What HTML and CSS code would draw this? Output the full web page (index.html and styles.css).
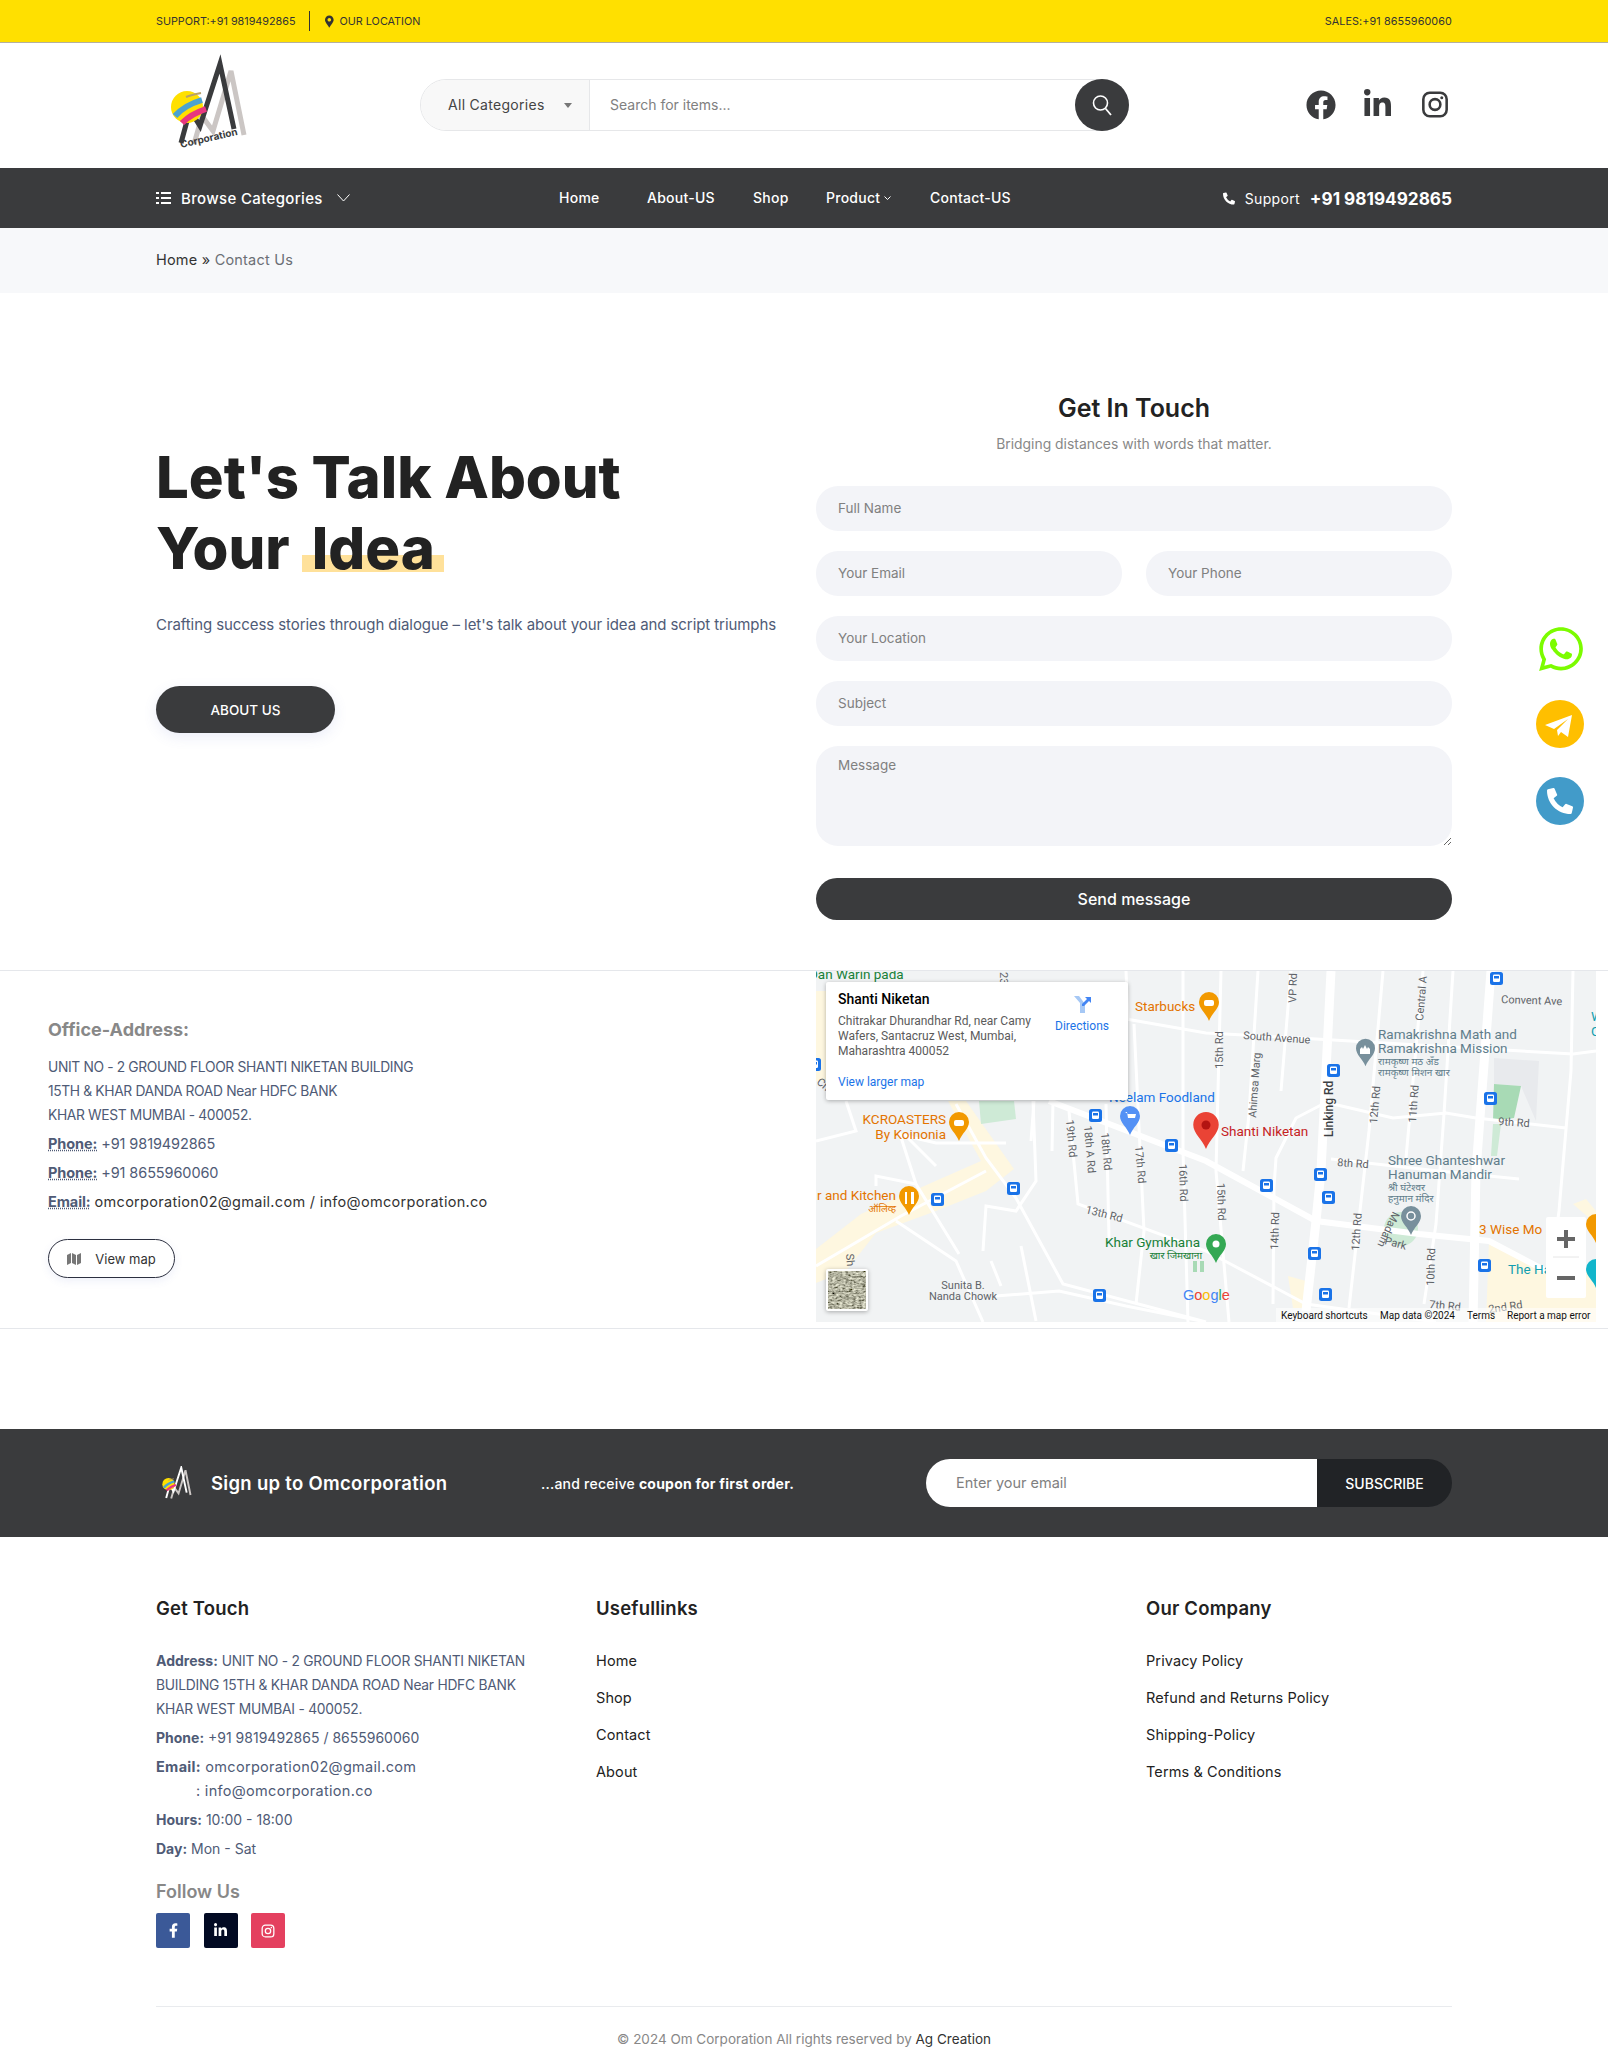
FILE: index.html
```html
<!DOCTYPE html>
<html lang="en">
<head>
<meta charset="utf-8" />
<title>Contact Us - Om Corporation</title>
<link rel="stylesheet" href="styles.css">
</head>
<body>
<svg class="defs" width="0" height="0">
  <filter id="sat" x="0" y="0" width="100%" height="100%">
    <feTurbulence type="fractalNoise" baseFrequency=".3 .55" numOctaves="2" seed="4"/>
    <feColorMatrix values="0 0 0 1.300 -.2  0 0 0 1.300 -.2  0 0 0 1.100 -.2  0 0 0 0 1"/>
  </filter>
  <symbol id="mark" viewBox="0 0 140 100">
    <path d="M54 98 62 70 73 85 91 25 104 89" fill="none" stroke="#cbc6c4" stroke-width="5"/>
    <path d="M41 97 50 64 60 80 80 18 94 83" fill="none" stroke="currentColor" stroke-width="5"/>
    <circle cx="47" cy="61" r="16" fill="#ffe000"/>
    <path d="M35 70C42 62 52 57 62 54" fill="none" stroke="#4ba3cf" stroke-width="6"/>
    <path d="M42 77C49 70 57 66 66 63" fill="none" stroke="#e8377f" stroke-width="6"/>
    <path d="M46 51C51 49 56 48 61 47" fill="none" stroke="#b8a16a" stroke-width="2"/>
  </symbol>
  <symbol id="phone" viewBox="0 0 512 512"><path d="M497.390 361.800l-112-48a24 24 0 0 0-28 6.900l-49.600 60.600A370.660 370.660 0 0 1 130.600 204.110l60.600-49.600a23.940 23.940 0 0 0 6.900-28l-48-112A24.160 24.160 0 0 0 122.600.61l-104 24A24 24 0 0 0 0 48c0 256.500 207.900 464 464 464a24 24 0 0 0 23.400-18.600l24-104a24.290 24.290 0 0 0-14.010-27.600z"/></symbol>
  <symbol id="fb-f" viewBox="0 0 320 512"><path d="M279.140 288l14.220-92.660h-88.910v-60.130c0-25.350 12.420-50.060 52.240-50.060h40.420V6.260S260.430 0 225.360 0c-73.220 0-121.080 44.380-121.080 124.720v70.620H22.890V288h81.390v224h100.170V288z"/></symbol>
  <symbol id="in" viewBox="0 0 448 512"><path d="M100.280 448H7.400V148.900h92.880zM53.790 108.100C24.090 108.100 0 83.500 0 53.800a53.790 53.790 0 0 1 107.580 0c0 29.700-24.100 54.300-53.790 54.300zM447.900 448h-92.680V302.400c0-34.700-.7-79.200-48.290-79.200-48.290 0-55.690 37.700-55.690 76.700V448h-92.780V148.900h89.080v40.800h1.300c12.400-23.500 42.690-48.300 87.880-48.300 94 0 111.280 61.900 111.280 142.300V448z"/></symbol>
  <symbol id="ig" viewBox="0 0 24 24"><rect x="2" y="2" width="20" height="20" rx="5.500" fill="none" stroke="currentColor" stroke-width="2.200"/><circle cx="12" cy="12" r="4.600" fill="none" stroke="currentColor" stroke-width="2.200"/><circle cx="17.800" cy="6.200" r="1.300" fill="currentColor"/></symbol>
  <symbol id="pin" viewBox="0 0 20 29"><path d="M10 0a10 10 0 0 1 10 10c0 7-7 11-10 19C7 21 0 17 0 10A10 10 0 0 1 10 0z"/></symbol>
  <symbol id="bus" viewBox="0 0 13 13"><rect width="13" height="13" rx="2.500" fill="#1a73e8"/><rect x="3" y="2.500" width="7" height="7.500" rx="1.200" fill="#fff"/><rect x="4" y="4" width="5" height="2.500" fill="#1a73e8"/></symbol>
</svg>

<div class="topbar">
  <div class="wrap topbar-in">
    <span>SUPPORT:+91 9819492865</span>
    <span class="top-sep"></span>
    <svg class="top-pin" viewBox="0 0 384 512"><path d="M172.268 501.670C26.970 291.031 0 262.429 0 184 0 82.380 82.380 0 184 0s184 82.380 184 184c0 78.429-26.970 107.031-172.268 317.670-9.535 13.774-29.930 13.773-39.464 0zM184 260c41.974 0 76-34.026 76-76s-34.026-76-76-76-76 34.026-76 76 34.026 76 76 76z"/></svg>
    <span>OUR LOCATION</span>
    <span class="top-sales">SALES:+91 8655960060</span>
  </div>
</div>

<header class="header">
  <div class="wrap header-in">
    <div class="logo">
      <svg viewBox="0 0 140 120" width="140" height="120">
        <use href="#mark" width="140" height="100" class="logo-dark"/>
        <text x="41" y="102" transform="rotate(-13 41 102)" class="logo-text">Corporation</text>
      </svg>
    </div>
    <form class="search">
      <div class="search-cat">All Categories <span class="caret"></span></div>
      <input class="search-input" type="text" placeholder="Search for items...">
      <button class="search-btn" type="button">
        <svg viewBox="0 0 24 24" width="24" height="24"><circle cx="10.500" cy="10" r="7" fill="none" stroke="#fff" stroke-width="1.600"/><path d="M15.500 15.500 21 22" stroke="#fff" stroke-width="1.800"/></svg>
      </button>
    </form>
    <div class="head-social">
      <svg class="hs-fb" viewBox="0 0 512 512"><path d="M504 256C504 119 393 8 256 8S8 119 8 256c0 123.780 90.690 226.380 209.250 245V327.690h-63V256h63v-54.640c0-62.150 37-96.480 93.670-96.480 27.140 0 55.520 4.840 55.520 4.840v61h-31.280c-30.800 0-40.410 19.120-40.410 38.730V256h68.780l-11 71.690h-57.780V501C413.310 482.380 504 379.780 504 256z"/></svg>
      <svg class="hs-in"><use href="#in"/></svg>
      <svg class="hs-ig"><use href="#ig"/></svg>
    </div>
  </div>
</header>

<nav class="nav">
  <div class="wrap nav-in">
    <div class="browse">
      <svg width="15" height="14" viewBox="0 0 15 14"><path d="M0 1h3v2H0zM5 1h10v2H5zM0 6h3v2H0zM5 6h10v2H5zM0 11h3v2H0zM5 11h10v2H5z" fill="#fff"/></svg>
      <span>Browse Categories</span>
      <svg width="13" height="8" viewBox="0 0 13 8"><path d="M.5.5l6 6.500 6-6.500" fill="none" stroke="#fff"/></svg>
    </div>
    <div class="nav-links">
      <a>Home</a>
      <a>About-US</a>
      <a>Shop</a>
      <a>Product <svg width="7" height="5" viewBox="0 0 7 5"><path d="M.5.5l3 3 3-3" fill="none" stroke="#fff"/></svg></a>
      <a>Contact-US</a>
    </div>
    <div class="support">
      <svg class="sup-ico"><use href="#phone"/></svg>
      <span>Support</span>
      <b>+91 9819492865</b>
    </div>
  </div>
</nav>

<div class="crumb">
  <div class="wrap"><a>Home</a> » <span>Contact Us</span></div>
</div>

<section class="wrap hero">
  <div class="hero-left">
    <h1>Let's Talk About<br>Your <span class="mark">Idea</span></h1>
    <p class="hero-text">Crafting success stories through dialogue – let's talk about your idea and script triumphs</p>
    <a class="btn-about">ABOUT US</a>
  </div>
  <div class="hero-form">
    <h2>Get In Touch</h2>
    <p class="form-sub">Bridging distances with words that matter.</p>
    <form class="form-grid">
      <input class="field full" placeholder="Full Name">
      <input class="field" placeholder="Your Email">
      <input class="field" placeholder="Your Phone">
      <input class="field full" placeholder="Your Location">
      <input class="field full" placeholder="Subject">
      <textarea class="field area full" placeholder="Message"></textarea>
      <button class="send full" type="button">Send message</button>
    </form>
  </div>
</section>

<section class="office">
  <div class="office-left">
    <h4>Office-Address:</h4>
    <p class="addr">UNIT NO - 2 GROUND FLOOR SHANTI NIKETAN BUILDING<br>15TH &amp; KHAR DANDA ROAD Near HDFC BANK<br>KHAR WEST MUMBAI - 400052.</p>
    <p class="contact"><abbr>Phone:</abbr> +91 9819492865</p>
    <p class="contact"><abbr>Phone:</abbr> +91 8655960060</p>
    <p class="contact"><abbr>Email:</abbr> <span class="dark">omcorporation02@gmail.com / info@omcorporation.co</span></p>
    <a class="view-map">
      <svg width="14" height="12" viewBox="0 0 14 12"><path d="M0 2l4-2v10l-4 2zM5 0l4 2v10l-4-2zM10 2l4-2v10l-4 2z" fill="#777"/></svg>
      View map
    </a>
  </div>
  <div class="map">
    <svg class="map-svg" width="780" height="351" viewBox="0 0 780 351">
      <rect width="780" height="351" fill="#f1f3f4"/>
      <!-- areas -->
      <path d="M0 312 0 278 45 243 115 212 165 190 132 130 150 130 198 198 170 220 120 240 60 262 30 300z" fill="#fef7e0"/>
      <path d="M0 20 20 20 20 110 0 110z" fill="#fef7e0"/>
      <path d="M673 270 730 300 780 300 780 351 670 351zM757 233 780 253 780 240 770 228zM472 305 490 310 487 337 477 337z" fill="#fef7e0"/>
      <path d="M163 130 198 130 200 148 165 153z" fill="#ceead6"/>
      <path d="M678 87 723 90 720 150 705 115 678 113z" fill="#e8eaed"/>
      <path d="M678 113 705 115 698 147 677 150z" fill="#a8dab5"/>
      <path d="M677 153 685 153 681 185 675 185z" fill="#ceead6"/>
      <circle cx="585" cy="258" r="17" fill="#ceead6"/>
      <path d="M377 290h4v11h-4zM384 290h4v11h-4z" fill="#a8dab5"/>
      <!-- roads -->
      <g class="road-s">
        <path d="M367 0 367 180 372 351M405 0 400 200 413 351M318 53 328 260 320 333M290 133 293 267M253 140 262 233 390 280 490 333 620 351M442 0 433 143 427 200M475 0 465 120M507 133 480 147 460 187 458 217 457 333"/>
        <path d="M637 0 628 143 620 253 608 333M607 0 590 187M517 133 577 147 630 142 660 147 750 157M515 188 623 200 703 208M757 0 755 100 743 240 735 300M567 0 553 160 533 337"/>
        <path d="M140 133 170 187 200 227 247 313 390 351M180 325 243 320 310 335 390 351M80 250 140 290 167 351M83 160 100 213 143 283M0 295 85 245 170 200M100 213 60 205 60 215M120 195 90 165 120 172 190 172M217 130 220 210 200 240 170 235 167 280M0 170 40 160 30 130"/>
        <path d="M310 48 390 62 500 68 757 83 780 80M310 0 312 48M215 170 218 130M237 130 236 180M205 275 220 350M175 290 185 315"/>
      </g>
      <g class="road-l">
        <path d="M233 130 390 190 500 250 603 263 673 270 730 300"/>
        <path d="M515 0 505 200 500 250 490 340"/>
        <path d="M675 0 660 200 657 351"/>
      </g>
      <!-- labels -->
      <g class="lbl-road">
        <text x="250" y="149" transform="rotate(85 250 149)">19th Rd</text>
        <text x="268" y="155" transform="rotate(85 268 155)">18th A Rd</text>
        <text x="285" y="162" transform="rotate(85 285 162)">18th Rd</text>
        <text x="319" y="175" transform="rotate(85 319 175)">17th Rd</text>
        <text x="363" y="193" transform="rotate(88 363 193)">16th Rd</text>
        <text x="269" y="242" transform="rotate(14 269 242)">13th Rd</text>
        <text x="407" y="98" transform="rotate(-90 407 98)">15th Rd</text>
        <text x="401" y="212" transform="rotate(88 401 212)">15th Rd</text>
        <text x="480" y="32" transform="rotate(-88 480 32)">VP Rd</text>
        <text x="427" y="68" transform="rotate(4 427 68)">South Avenue</text>
        <text x="440" y="147" transform="rotate(-86 440 147)">Ahimsa Marg</text>
        <text x="561" y="153" transform="rotate(-85 561 153)">12th Rd</text>
        <text x="607" y="50" transform="rotate(-85 607 50)">Central A</text>
        <text x="600" y="152" transform="rotate(-86 600 152)">11th Rd</text>
        <text x="685" y="32" transform="rotate(2 685 32)">Convent Ave</text>
        <text x="682" y="154" transform="rotate(4 682 154)">9th Rd</text>
        <text x="521" y="195" transform="rotate(4 521 195)">8th Rd</text>
        <text x="543" y="280" transform="rotate(-86 543 280)">12th Rd</text>
        <text x="462" y="279" transform="rotate(-88 462 279)">14th Rd</text>
        <text x="618" y="315" transform="rotate(-88 618 315)">10th Rd</text>
        <text x="613" y="337" transform="rotate(5 613 337)">7th Rd</text>
        <text x="673" y="342" transform="rotate(-8 673 342)">2nd Rd</text>
        <text x="184" y="1" transform="rotate(90 184 1)">23</text>
        <text x="30" y="283" transform="rotate(85 30 283)">Sh</text>
        <text x="577" y="240" transform="rotate(115 577 240)">Madam</text>
        <text x="568" y="273" transform="rotate(15 568 273)">Park</text>
        <text x="0" y="112" transform="rotate(40 0 112)">Ch</text>
        <text x="147" y="318" class="mid">Sunita B.</text>
        <text x="147" y="329" class="mid">Nanda Chowk</text>
      </g>
      <text x="517" y="166" transform="rotate(-90 517 166)" class="lbl-main">Linking Rd</text>
      <g class="lbl-poi">
        <text x="-7" y="8" fill="#188038">Dan Warin pada</text>
        <text x="319" y="40" fill="#e37400">Starbucks</text>
        <text x="130" y="153" class="end" fill="#e37400">KCROASTERS</text>
        <text x="130" y="168" class="end" fill="#e37400">By Koinonia</text>
        <text x="80" y="229" class="end" fill="#e37400">r and Kitchen</text>
        <text x="293" y="131" fill="#1a73e8">Neelam Foodland</text>
        <text x="405" y="165" fill="#c5221f">Shanti Niketan</text>
        <text x="289" y="276" fill="#188038">Khar Gymkhana</text>
        <text x="562" y="68" fill="#607d8b">Ramakrishna Math and</text>
        <text x="562" y="82" fill="#607d8b">Ramakrishna Mission</text>
        <text x="572" y="194" fill="#607d8b">Shree Ghanteshwar</text>
        <text x="572" y="208" fill="#607d8b">Hanuman Mandir</text>
        <text x="663" y="263" fill="#e37400">3 Wise Mo</text>
        <text x="692" y="303" fill="#129eaf">The Ha</text>
        <text x="775" y="50" fill="#129eaf">W</text>
        <text x="775" y="65" fill="#129eaf">C</text>
      </g>
      <g class="lbl-hi">
        <text x="80" y="241" class="end" fill="#e37400">ऑलिव्ह</text>
        <text x="386" y="288" class="end" fill="#188038">खार जिमखाना</text>
        <text x="562" y="94" fill="#607d8b">रामकृष्ण मठ अँड</text>
        <text x="562" y="105" fill="#607d8b">रामकृष्ण मिशन खार</text>
        <text x="572" y="220" fill="#607d8b">श्री घंटेश्वर</text>
        <text x="572" y="231" fill="#607d8b">हनुमान मंदिर</text>
      </g>
      <!-- pins -->
      <use href="#pin" x="383" y="21" width="20" height="29" fill="#f29900"/>
      <rect x="388" y="29" width="10" height="6" rx="2" fill="#fff"/>
      <use href="#pin" x="133" y="141" width="20" height="29" fill="#f29900"/>
      <rect x="138" y="149" width="10" height="6" rx="2" fill="#fff"/>
      <use href="#pin" x="83" y="215" width="20" height="29" fill="#f29900"/>
      <path d="M89 221h2v12h-2zM95 221h3v12h-3z" fill="#fff"/>
      <use href="#pin" x="304" y="135" width="20" height="29" fill="#5491f5"/>
      <path d="M309 141h2l1 6h7l1-4h-8z" fill="#fff"/>
      <use href="#pin" x="377" y="141" width="26" height="37" fill="#ea4335"/>
      <circle cx="390" cy="154" r="4.500" fill="#b31412"/>
      <use href="#pin" x="390" y="263" width="20" height="29" fill="#34a853"/>
      <circle cx="400" cy="273" r="3.500" fill="#fff"/>
      <use href="#pin" x="540" y="67" width="19" height="29" fill="#78909c"/>
      <path d="M544 83v-5l2-2 1 2 2-4 2 4 1-2 2 2v5z" fill="#fff"/>
      <use href="#pin" x="585" y="235" width="20" height="29" fill="#78909c"/>
      <circle cx="595" cy="245" r="4" fill="none" stroke="#fff" stroke-width="1.500"/>
      <use href="#pin" x="770" y="243" width="20" height="29" fill="#f29900"/>
      <use href="#pin" x="770" y="288" width="20" height="29" fill="#12b5cb"/>
      <!-- bus stops -->
      <use href="#bus" x="273" y="138" width="13" height="13"/>
      <use href="#bus" x="349" y="168" width="13" height="13"/>
      <use href="#bus" x="191" y="211" width="13" height="13"/>
      <use href="#bus" x="115" y="222" width="13" height="13"/>
      <use href="#bus" x="277" y="318" width="13" height="13"/>
      <use href="#bus" x="674" y="1" width="13" height="13"/>
      <use href="#bus" x="511" y="93" width="13" height="13"/>
      <use href="#bus" x="668" y="121" width="13" height="13"/>
      <use href="#bus" x="498" y="197" width="13" height="13"/>
      <use href="#bus" x="444" y="208" width="13" height="13"/>
      <use href="#bus" x="506" y="220" width="13" height="13"/>
      <use href="#bus" x="492" y="276" width="13" height="13"/>
      <use href="#bus" x="662" y="288" width="13" height="13"/>
      <use href="#bus" x="503" y="317" width="13" height="13"/>
      <use href="#bus" x="-8" y="87" width="13" height="13"/>
      <!-- google -->
      <text x="367" y="329" class="lbl-google"><tspan fill="#4285f4">G</tspan><tspan fill="#ea4335">o</tspan><tspan fill="#fbbc05">o</tspan><tspan fill="#4285f4">g</tspan><tspan fill="#34a853">l</tspan><tspan fill="#ea4335">e</tspan></text>
      <!-- satellite thumb -->
      <rect x="10" y="298" width="42" height="42" rx="2" fill="#fff" class="sat-frame"/>
      <rect x="12" y="300" width="38" height="38" filter="url(#sat)"/>
      <!-- zoom control -->
      <rect x="730" y="246" width="40" height="81" rx="2" fill="#fff"/>
      <path d="M737 286h26" stroke="#e6e6e6"/>
      <path d="M748 259h4v7h7v4h-7v7h-4v-7h-7v-4h7zM741 275" fill="#666"/>
      <path d="M741 305h18v4h-18z" fill="#666"/>
      <!-- attribution -->
      <rect x="460" y="337" width="320" height="14" fill="#fff" opacity=".55"/>
      <g class="lbl-attr">
        <text x="465" y="348">Keyboard shortcuts</text>
        <text x="564" y="348">Map data ©2024</text>
        <text x="651" y="348">Terms</text>
        <text x="691" y="348">Report a map error</text>
      </g>
    </svg>
    <div class="map-card">
      <div class="card-info">
        <div class="card-title">Shanti Niketan</div>
        <div class="card-addr">Chitrakar Dhurandhar Rd, near Camy Wafers, Santacruz West, Mumbai, Maharashtra 400052</div>
        <a class="card-link">View larger map</a>
      </div>
      <div class="card-dir">
        <svg width="18" height="19" viewBox="0 0 18 19"><path d="M1 1l6 7v10h5V9L6 1z" fill="#a6c8f5"/><path d="M9 9l5-5-2-2h6v6l-2-2-5 5H9z" fill="#4285f4"/></svg>
        <a class="card-link">Directions</a>
      </div>
    </div>
  </div>
</section>

<section class="news">
  <div class="wrap news-in">
    <svg class="news-logo" viewBox="28 14 82 88"><use href="#mark" width="140" height="100" class="news-mark"/></svg>
    <h3>Sign up to Omcorporation</h3>
    <p class="news-text">...and receive <b>coupon for first order.</b></p>
    <form class="news-form">
      <input placeholder="Enter your email">
      <button type="button">SUBSCRIBE</button>
    </form>
  </div>
</section>

<footer class="wrap footer">
  <div class="foot-cols">
    <div>
      <h4>Get Touch</h4>
      <p class="fline"><b>Address:</b> <span class="upper">UNIT NO - 2 GROUND FLOOR SHANTI NIKETAN<br>BUILDING 15TH &amp; KHAR DANDA ROAD Near HDFC BANK<br>KHAR WEST MUMBAI - 400052.</span></p>
      <p class="fline"><b>Phone:</b> +91 9819492865 / 8655960060</p>
      <p class="fline lower"><b>Email:</b> omcorporation02@gmail.com<br><span class="indent">: info@omcorporation.co</span></p>
      <p class="fline"><b>Hours:</b> 10:00 - 18:00</p>
      <p class="fline"><b>Day:</b> Mon - Sat</p>
      <div class="follow">Follow Us</div>
      <div class="foot-social">
        <a class="s-fb"><svg width="9" height="15"><use href="#fb-f"/></svg></a>
        <a class="s-in"><svg width="13" height="15"><use href="#in"/></svg></a>
        <a class="s-ig"><svg width="14" height="14"><use href="#ig"/></svg></a>
      </div>
    </div>
    <div>
      <h4>Usefullinks</h4>
      <ul class="foot-links">
        <li>Home</li>
        <li>Shop</li>
        <li>Contact</li>
        <li>About</li>
      </ul>
    </div>
    <div>
      <h4>Our Company</h4>
      <ul class="foot-links">
        <li>Privacy Policy</li>
        <li>Refund and Returns Policy</li>
        <li>Shipping-Policy</li>
        <li>Terms &amp; Conditions</li>
      </ul>
    </div>
  </div>
  <div class="copy">© 2024 Om Corporation All rights reserved by <span>Ag Creation</span></div>
</footer>

<div class="float-btns">
  <a class="fl-wa"><svg width="44" height="50" viewBox="0 0 448 512"><path d="M380.900 97.100C339 55.100 283.200 32 223.900 32c-122.400 0-222 99.600-222 222 0 39.100 10.200 77.300 29.600 111L0 480l117.700-30.900c32.400 17.700 68.900 27 106.100 27h.1c122.300 0 224.100-99.600 224.100-222 0-59.300-25.200-115-67.100-157zm-157 341.600c-33.200 0-65.700-8.900-94-25.700l-6.700-4-69.800 18.300L72 359.200l-4.400-7c-18.500-29.400-28.200-63.300-28.200-98.200 0-101.700 82.800-184.500 184.600-184.500 49.300 0 95.600 19.200 130.400 54.100 34.800 34.900 56.200 81.200 56.100 130.500 0 101.800-84.900 184.600-186.600 184.600zm101.200-138.200c-5.500-2.800-32.800-16.200-37.900-18-5.100-1.900-8.800-2.800-12.500 2.800-3.700 5.600-14.300 18-17.600 21.800-3.200 3.700-6.500 4.200-12 1.400-32.600-16.300-54-29.100-75.500-66-5.700-9.800 5.700-9.100 16.300-30.300 1.800-3.700.9-6.900-.5-9.700-1.400-2.800-12.500-30.100-17.100-41.200-4.500-10.800-9.100-9.300-12.500-9.500-3.200-.2-6.900-.2-10.600-.2-3.700 0-9.700 1.400-14.800 6.900-5.100 5.600-19.400 19-19.400 46.300 0 27.300 19.900 53.700 22.600 57.400 2.800 3.700 39.100 59.700 94.800 83.800 35.200 15.200 49 16.500 66.600 13.900 10.700-1.600 32.800-13.400 37.400-26.400 4.600-13 4.600-24.100 3.200-26.400-1.300-2.500-5-3.900-10.500-6.600z"/></svg></a>
  <a class="fl-tg"><svg width="48" height="48" viewBox="0 0 48 48"><path d="M36 15 9 25l9 4 14-10-11 11 1 6 3-4 7 5z" fill="#fff"/></svg></a>
  <a class="fl-ph"><svg width="26" height="26"><use href="#phone"/></svg></a>
</div>
</body>
</html>
```

FILE: styles.css
```css
* {
  box-sizing: border-box;
}

body {
  margin: 0;
  font-family: Inter, "Noto Sans", sans-serif;
  color: #222;
  background-color: #fff;
  position: relative;
}

.defs {
  position: absolute;
}

.wrap {
  width: 1296px;
  margin: 0 auto;
}

h1, h2, h3, h4, p, ul {
  margin: 0;
  padding: 0;
}

/* top bar */
.topbar {
  height: 43px;
  background-color: #ffe000;
  border-bottom: 1px solid #b4b0a0;
  font-size: 10.800px;
  color: #333;
}

.topbar-in {
  height: 42px;
  display: flex;
  align-items: center;
}

.top-sep {
  width: 1px;
  height: 20px;
  background-color: #333;
  margin: 0 15px 0 13px;
}

.top-pin {
  width: 9px;
  height: 13px;
  margin-right: 6px;
  fill: #333;
}

.top-sales {
  margin-left: auto;
  letter-spacing: .1px;
}

/* header */
.header-in {
  height: 125px;
  display: flex;
  align-items: center;
}

.logo {
  width: 264px;
  height: 120px;
  margin-left: -16px;
  flex-shrink: 0;
  margin-right: 16px;
}

.logo-dark {
  color: #3a3b3d;
}

.logo-text {
  font-size: 10px;
  font-weight: 700;
  fill: #3a3b3d;
}

.search {
  width: 709px;
  height: 52px;
  margin-top: -1px;
  display: flex;
  border: 1px solid #e6e7e9;
  border-radius: 26px;
  position: relative;
}

.search-cat {
  width: 169px;
  background-color: #f8f8f8;
  border-right: 1px solid #e6e7e9;
  border-radius: 26px 0 0 26px;
  padding: 0 0 2px 27px;
  display: flex;
  align-items: center;
  font-size: 14px;
  letter-spacing: .3px;
  color: #444;
}

.caret {
  border-top: 5px solid #777;
  border-left: 4px solid transparent;
  border-right: 4px solid transparent;
  margin: 3px 0 0 19px;
}

.search-input {
  flex: 1;
  border: none;
  outline: none;
  padding: 0 20px 2px;
  font: 14px Inter, sans-serif;
  background: none;
}

.search-btn {
  position: absolute;
  right: -1px;
  top: -1px;
  width: 54px;
  height: 52px;
  border: none;
  border-radius: 50%;
  background-color: #3a3b3d;
  padding: 0;
  display: flex;
  align-items: center;
  justify-content: center;
}

.head-social {
  margin-left: auto;
  margin-right: 3px;
  margin-top: -2px;
  display: flex;
  align-items: center;
  fill: #3a3b3d;
  color: #3a3b3d;
}

.hs-fb {
  width: 30px;
  height: 30px;
}

.hs-in {
  width: 27px;
  height: 31px;
  margin-left: 28px;
}

.hs-ig {
  width: 28px;
  height: 29px;
  margin-left: 30px;
}

/* nav */
.nav {
  height: 60px;
  background-color: #3a3b3d;
  color: #fff;
}

.nav-in {
  height: 60px;
  display: flex;
  align-items: center;
}

.browse {
  width: 403px;
  display: flex;
  align-items: center;
  gap: 10px;
  font-size: 15px;
  font-weight: 500;
  letter-spacing: .35px;
}

.browse svg:last-child {
  margin-left: 4px;
}

.nav-links {
  display: grid;
  grid-template-columns: 88px 106px 73px 104px 100px;
  font-size: 14px;
  font-weight: 500;
  letter-spacing: .25px;
  margin-top: -1px;
}

.nav-links svg {
  vertical-align: 2px;
}

.support {
  margin-left: auto;
  display: flex;
  align-items: center;
  font-size: 14px;
  letter-spacing: .3px;
}

.sup-ico {
  width: 12px;
  height: 13px;
  fill: #fff;
  margin-right: 10px;
}

.support b {
  font-size: 17.200px;
  font-weight: 700;
  margin-left: 10px;
  letter-spacing: 0;
}

/* breadcrumb */
.crumb {
  height: 65px;
  background-color: #f7f8fa;
  font-size: 14.500px;
  line-height: 64px;
  letter-spacing: .2px;
  color: #333;
}

.crumb span {
  color: #6b6f75;
}

/* hero */
.hero {
  display: flex;
  height: 677px;
}

.hero-left {
  width: 660px;
  padding-top: 149px;
}

h1 {
  font-size: 58px;
  line-height: 71px;
  font-weight: 800;
  color: #222;
}

.mark {
  display: inline-block;
  padding: 0 9.500px;
  background: linear-gradient(#ffe19a, #ffe19a) no-repeat 0 42px / 100% 17px;
}

.hero-text {
  margin-top: 29px;
  font-size: 15px;
  line-height: 24px;
  letter-spacing: -.08px;
  color: #4f5b76;
  white-space: nowrap;
}

.btn-about {
  display: flex;
  width: 179px;
  height: 47px;
  margin-top: 49px;
  align-items: center;
  justify-content: center;
  border-radius: 24px;
  background-color: #3a3b3d;
  color: #fff;
  font-size: 13.500px;
  font-weight: 500;
  box-shadow: 0 4px 14px rgba(90, 110, 200, .12);
}

.hero-form {
  width: 636px;
  padding-top: 95px;
  text-align: center;
}

h2 {
  font-size: 25px;
  line-height: 40px;
  font-weight: 600;
}

.form-sub {
  margin-top: 5px;
  font-size: 13.900px;
  line-height: 22px;
  color: #888;
}

.form-grid {
  margin-top: 31px;
  display: grid;
  grid-template-columns: 306px 306px;
  gap: 20px 24px;
}

.full {
  grid-column: 1 / 3;
}

.field {
  height: 45px;
  border: none;
  outline: none;
  background-color: #f3f4f8;
  border-radius: 22px;
  padding: 0 22px 2px;
  font: 13.500px Inter, sans-serif;
}

.field::placeholder,
.search-input::placeholder,
.news-form input::placeholder {
  color: #808080;
  opacity: 1;
}

.area {
  height: 100px;
  padding-top: 11px;
  margin-bottom: 12px;
}

.send {
  height: 42px;
  border: none;
  border-radius: 21px;
  padding-bottom: 2px;
  background-color: #3a3b3d;
  color: #fff;
  font: 500 16px Inter, sans-serif;
}

/* office */
.office {
  height: 359px;
  display: flex;
  border-top: 1px solid #e5e7eb;
  border-bottom: 1px solid #e5e7eb;
}

.office-left {
  width: 816px;
  padding: 47px 0 0 48px;
  font-size: 14.500px;
  color: #4f5b76;
}

.office-left h4 {
  font-size: 18px;
  line-height: 24px;
  font-weight: 700;
  color: #888;
  margin-bottom: 13px;
}

.addr {
  font-size: 13.800px;
  letter-spacing: -.35px;
  line-height: 24px;
  white-space: nowrap;
  margin-bottom: 5px;
}

.contact {
  line-height: 24px;
  margin-bottom: 5px;
  white-space: nowrap;
  letter-spacing: -.1px;
}

abbr {
  font-weight: 700;
  text-decoration: underline dotted;
}

.dark {
  color: #333;
  letter-spacing: .3px;
}

.view-map {
  margin-top: 25px;
  display: flex;
  width: 127px;
  height: 39px;
  align-items: center;
  justify-content: center;
  gap: 14px;
  border: 1px solid #2c3040;
  border-radius: 20px;
  font-size: 13px;
  color: #333;
  box-shadow: 0 3px 8px rgba(90, 110, 200, .1);
}

.map {
  position: relative;
  width: 780px;
  height: 351px;
  overflow: hidden;
}

.map-svg {
  display: block;
  font-family: Roboto, sans-serif;
}

.sat-frame {
  filter: drop-shadow(0 1px 2px rgba(0, 0, 0, .3));
}

.road-s path {
  fill: none;
  stroke: #fff;
  stroke-width: 3;
}

.road-l path {
  fill: none;
  stroke: #fff;
  stroke-width: 9;
}

.road-l path:first-child {
  stroke-width: 6;
}

.lbl-road text {
  font-size: 11px;
  fill: #5f6368;
}

.mid {
  text-anchor: middle;
}

.end {
  text-anchor: end;
}

.lbl-main {
  font-size: 12px;
  font-weight: 500;
  fill: #3c4043;
}

.lbl-poi text {
  font-size: 13.500px;
}

.lbl-hi text {
  font-family: "Noto Sans", "DejaVu Sans", sans-serif;
  font-size: 10px;
}

.lbl-google {
  font: 400 14.500px "Liberation Sans", sans-serif;
}

.lbl-attr text {
  font-size: 10px;
  fill: #111;
}

.map-card {
  position: absolute;
  left: 10px;
  top: 11px;
  width: 302px;
  height: 118px;
  background-color: #fff;
  border-radius: 2px;
  box-shadow: 0 1px 4px rgba(0, 0, 0, .3);
  padding: 7px 12px 0 12px;
  display: flex;
  font-family: Roboto, sans-serif;
  font-size: 12px;
}

.card-info {
  width: 210px;
}

.card-title {
  font-size: 14px;
  font-weight: 500;
  color: #000;
  line-height: 20px;
}

.card-addr {
  color: #5b5b5b;
  line-height: 15px;
  margin-top: 5px;
  height: 60px;
  width: 200px;
}

.card-link {
  color: #1a73e8;
  line-height: 16px;
}

.card-dir {
  flex: 1;
  text-align: center;
  padding-top: 6px;
}

.card-dir svg {
  display: block;
  margin: 0 auto 4px;
}

/* newsletter */
.news {
  margin-top: 100px;
  height: 108px;
  background-color: #3a3b3d;
  color: #fff;
}

.news-in {
  height: 108px;
  display: flex;
  align-items: center;
}

.news-logo {
  width: 32px;
  height: 34px;
  margin-left: 5px;
  color: #fff;
}

.news-in h3 {
  width: 330px;
  margin-left: 18px;
  font-size: 18.500px;
  font-weight: 600;
  letter-spacing: .3px;
}

.news-text {
  width: 385px;
  font-size: 14px;
  font-weight: 500;
  letter-spacing: .23px;
}

.news-text b {
  font-weight: 700;
}

.news-form {
  margin-left: auto;
  width: 526px;
  height: 48px;
  display: flex;
}

.news-form input {
  width: 391px;
  border: none;
  outline: none;
  border-radius: 24px 0 0 24px;
  padding: 0 30px 2px;
  font: 14.500px Inter, sans-serif;
}

.news-form button {
  flex: 1;
  border: none;
  border-radius: 0 24px 24px 0;
  background-color: #212326;
  color: #fff;
  font: 500 14px Inter, sans-serif;
}

/* footer */
.footer {
  padding-top: 58px;
}

.foot-cols {
  height: 412px;
  display: grid;
  grid-template-columns: 440px 550px 306px;
  border-bottom: 1px solid #e9ebee;
}

.foot-cols h4 {
  font-size: 18.500px;
  line-height: 26px;
  font-weight: 600;
  margin-bottom: 28px;
  letter-spacing: .2px;
}

.foot-cols > div:first-child {
  width: 400px;
}

.fline {
  font-size: 14px;
  line-height: 24px;
  color: #4f5b76;
  margin-bottom: 5px;
  white-space: nowrap;
}

.fline b {
  font-weight: 700;
}

.upper {
  font-size: 13.800px;
  letter-spacing: -.25px;
}

.lower {
  font-size: 14.500px;
  letter-spacing: .3px;
}

.indent {
  padding-left: 40px;
}

.follow {
  margin-top: 18px;
  font-size: 18px;
  line-height: 26px;
  font-weight: 600;
  color: #888;
}

.foot-social {
  margin-top: 8px;
  display: flex;
  gap: 13.500px;
}

.foot-social a {
  width: 34px;
  height: 35px;
  border-radius: 2px;
  display: flex;
  align-items: center;
  justify-content: center;
  color: #fff;
  fill: #fff;
}

.s-fb {
  background-color: #3b5998;
}

.s-in {
  background-color: #020a23;
}

.s-ig {
  background-color: #e4405f;
}

.foot-links {
  list-style: none;
}

.foot-links li {
  font-size: 14.500px;
  line-height: 24px;
  margin-bottom: 13px;
  letter-spacing: .1px;
  color: #222;
}

.copy {
  height: 64px;
  line-height: 64px;
  text-align: center;
  font-size: 13.500px;
  color: #888;
}

.copy span {
  color: #333;
}

/* floating buttons */
.float-btns {
  position: absolute;
  left: 1536px;
  top: 624px;
  width: 48px;
  fill: #fff;
}

.float-btns a {
  display: flex;
  align-items: center;
  justify-content: center;
}

.fl-wa {
  height: 50px;
  margin-left: 2px;
  fill: #7cfc00;
}

.fl-tg {
  height: 48px;
  margin-top: 26px;
  border-radius: 50%;
  background-color: #ffbf00;
}

.fl-ph {
  height: 48px;
  margin-top: 29px;
  border-radius: 50%;
  background-color: #429bc9;
}
```
